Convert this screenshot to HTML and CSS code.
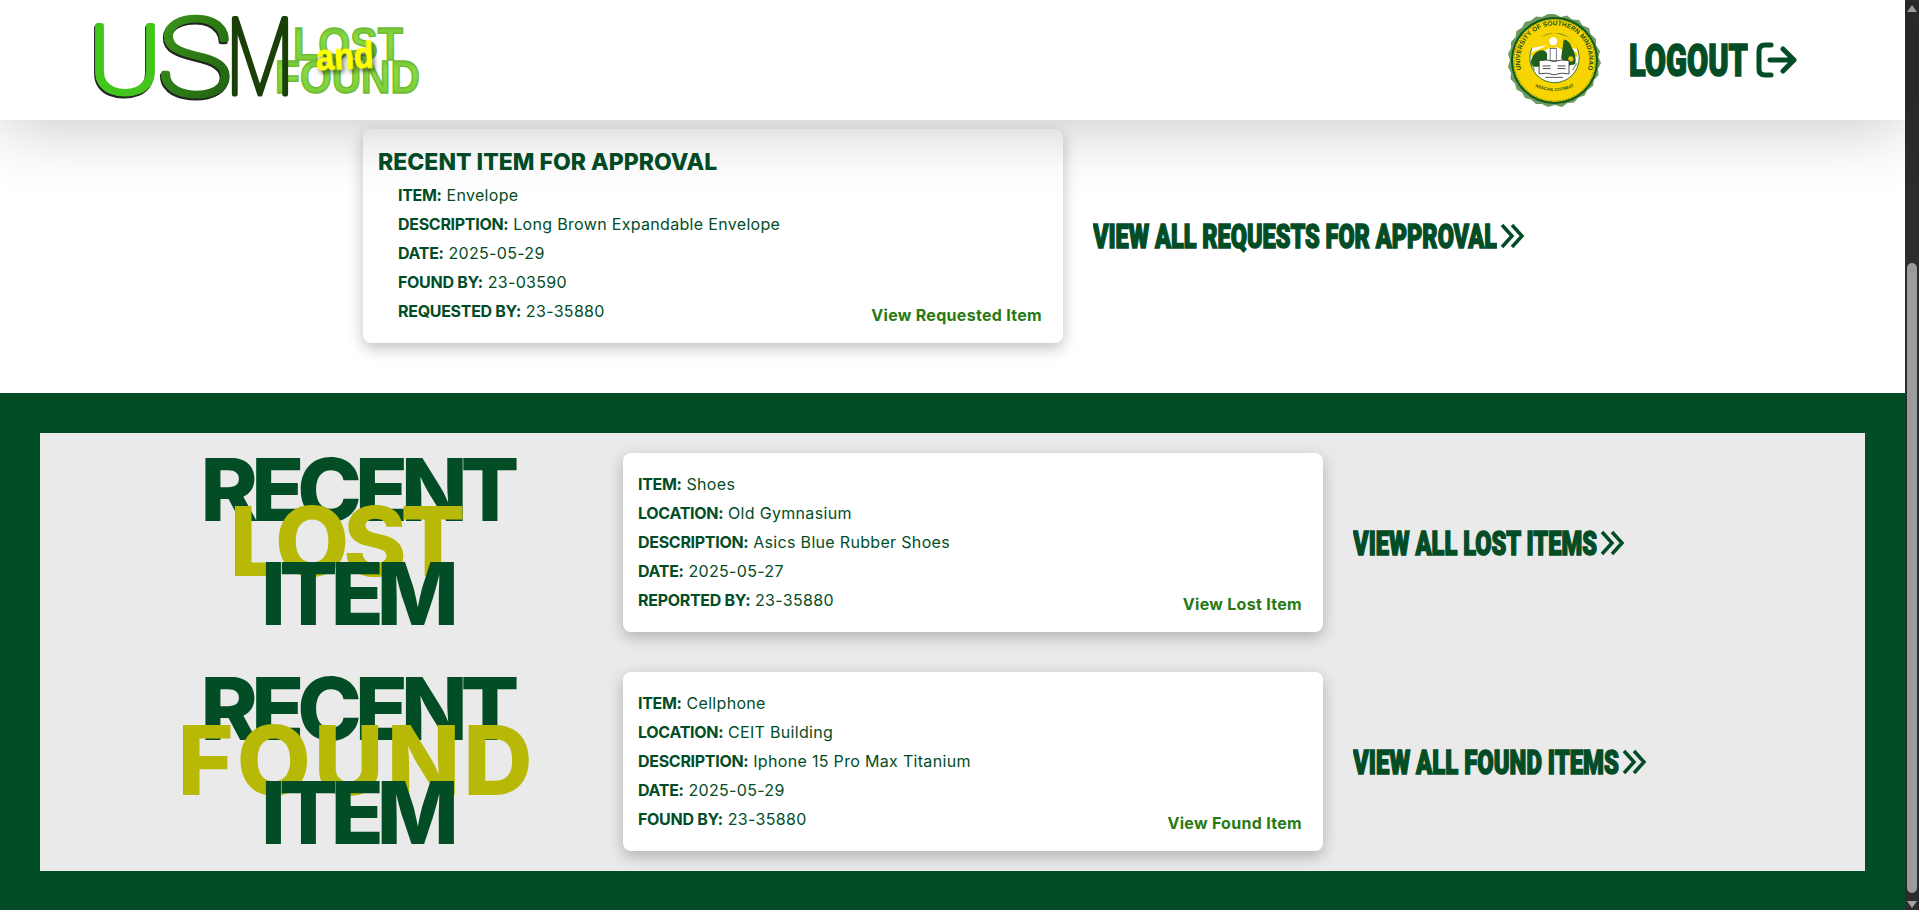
FILE: index.html
```html
<!DOCTYPE html>
<html lang="en">
<head>
    <meta charset="UTF-8">
    <meta name="viewport" content="width=device-width, initial-scale=1.0">
    <title>USM Lost and Found</title>
    <link rel="stylesheet" href="styles.css">
</head>
<body>
    <div class="page">
        <header class="topbar">
            <svg class="logo" width="370" height="120" viewBox="0 0 370 120" role="img" aria-label="USM Lost and Found">
                <defs>
                    <linearGradient id="sGrad" x1="0" y1="0" x2="1" y2="1">
                        <stop offset="0" stop-color="#3f9c1c"/>
                        <stop offset="1" stop-color="#1c5a0f"/>
                    </linearGradient>
                    <linearGradient id="wordGrad" x1="0" y1="0" x2="0" y2="1">
                        <stop offset="0" stop-color="#5fa82d"/>
                        <stop offset="0.35" stop-color="#88da40"/>
                        <stop offset="0.75" stop-color="#80d03c"/>
                        <stop offset="1" stop-color="#55992a"/>
                    </linearGradient>
                </defs>
                <text class="logo-word" x="231" y="60" font-size="46" textLength="110" lengthAdjust="spacingAndGlyphs" fill="url(#wordGrad)">LOST</text>
                <text class="logo-word" x="213" y="93" font-size="46" textLength="145" lengthAdjust="spacingAndGlyphs" fill="url(#wordGrad)">FOUND</text>
                <text class="logo-big logo-u" x="26" y="93" font-size="94" textLength="74" lengthAdjust="spacingAndGlyphs">U</text>
                <text class="logo-big logo-s" x="96" y="95" font-size="108" textLength="74" lengthAdjust="spacingAndGlyphs">S</text>
                <text class="logo-big logo-m" x="164" y="94" font-size="105" textLength="68" lengthAdjust="spacingAndGlyphs">M</text>
                <text class="logo-and" x="254" y="69" font-size="37" textLength="58" lengthAdjust="spacingAndGlyphs" transform="rotate(-3 283 58)">and</text>
            </svg>
            <div class="topbar-right">
                <svg class="seal" width="93" height="93" viewBox="0 0 93 93" role="img" aria-label="University of Southern Mindanao seal">
                    <defs>
                        <path id="sealTop" d="M16 62 A34.500 34.500 0 1 1 77 62"/>
                        <path id="sealBottom" d="M26 72 Q46.500 82 67 72"/>
                    </defs>
                    <polygon fill="#6d9a5f" points="46.5,0 53,3 59,1.500 64,5.500 71,6 74.500,11.500 81,14 82.500,20 88,25 88,31 92,37 90.500,43 93,49 90,55 90.500,61 86,66 85,72 79.500,76 76.500,81.500 70.500,83.500 66,88.500 59.500,89 54,93 47,91 40,93 34,90 28,90 23,85.500 17,84 14,78.500 8.500,75.500 7,69.500 2.500,65 3,58.500 0,53 2,46.500 0,40 3,34 3,28 7.500,23 8.500,17 14,13.500 17,8 23,6.500 28,2.500 34,3 40,0"/>
                    <circle cx="46.500" cy="46.500" r="43.500" fill="#0d5a1c"/>
                    <circle cx="46.500" cy="46.500" r="41.500" fill="#f8d400"/>
                    <circle cx="46.500" cy="46.500" r="40.500" fill="none" stroke="#1d6a20" stroke-width="0.700" stroke-dasharray="1.500 1.500"/>
                    <text class="seal-text"><textPath href="#sealTop" startOffset="50%" text-anchor="middle" textLength="128">UNIVERSITY OF SOUTHERN MINDANAO</textPath></text>
                    <text class="seal-motto"><textPath href="#sealBottom" startOffset="50%" text-anchor="middle">KABACAN, COTABATO</textPath></text>
                    <g transform="translate(5.600 5.300) scale(0.880)">
                        <circle cx="46.500" cy="44" r="28" fill="#fff" stroke="#1f6a22" stroke-width="1"/>
                        <polygon fill="#f8d400" points="46,28 19,33 22,27 30,20 46,15 62,20 70,27 73,34"/>
                        <polygon fill="#f8d400" points="46,30 20,43 20,38 46,26 72,38 72,43"/>
                        <circle cx="45" cy="25" r="7.500" fill="#f8d400"/>
                        <circle cx="45" cy="25" r="4.500" fill="#fff"/>
                        <path fill="#1f5f1c" d="M25 38 Q34 32 38 39 L38 50 Q30 56 20 53 Q18 45 25 38Z"/>
                        <path fill="#1f5f1c" d="M54 44 L57 23 Q64 24 66 32 Q72 40 70 51 L60 53Z"/>
                        <circle cx="65" cy="45" r="3" fill="#e2c400"/>
                        <rect x="41.500" y="33" width="7" height="14" fill="#fff" stroke="#444" stroke-width="0.800"/>
                        <path fill="#fff" stroke="#333" stroke-width="1" d="M29 47 Q38 45 46 48 Q54 45 63 47 V62 Q54 60 46 63 Q38 60 29 62Z"/>
                        <path fill="none" stroke="#333" stroke-width="1" d="M33 53 H42 M50 53 H59 M33 56 H42 M50 56 H59"/>
                        <path fill="none" stroke="#6a9a60" stroke-width="1.200" d="M24 58 L20 50 M67 58 L72 50"/>
                        <path fill="none" stroke="#444" stroke-width="1" d="M36 66 H56"/>
                    </g>
                </svg>
                <a class="logout" href="#">
                    <span class="impact-label">
                        <svg width="119" height="54" viewBox="0 0 119 54" role="img" aria-label="LOGOUT"><text class="impact" x="0" y="43" font-size="45" textLength="119" lengthAdjust="spacingAndGlyphs">LOGOUT</text></svg>
                    </span>
                    <svg class="logout-icon" width="41" height="36" viewBox="0 0 41 36" aria-hidden="true">
                        <path d="M15 3 H9 Q3 3 3 9 V27 Q3 33 9 33 H15 M14 18 H38 M27 7 L38 18 L27 29"/>
                    </svg>
                </a>
            </div>
        </header>

        <section class="approval">
            <div class="card card-approval">
                <h2 class="card-title">RECENT ITEM FOR APPROVAL</h2>
                <div class="card-rows indented">
                    <p class="row"><b>ITEM:</b> Envelope</p>
                    <p class="row"><b>DESCRIPTION:</b> Long Brown Expandable Envelope</p>
                    <p class="row"><b>DATE:</b> 2025-05-29</p>
                    <p class="row"><b>FOUND BY:</b> 23-03590</p>
                    <div class="row row-last">
                        <p><b>REQUESTED BY:</b> 23-35880</p>
                        <a class="view-link" href="#">View Requested Item</a>
                    </div>
                </div>
            </div>
            <a class="view-all" href="#">
                <svg width="404" height="44" viewBox="0 0 404 44" role="img" aria-label="VIEW ALL REQUESTS FOR APPROVAL"><text class="impact" x="0" y="34" font-size="34" textLength="404" lengthAdjust="spacingAndGlyphs">VIEW ALL REQUESTS FOR APPROVAL</text></svg>
                <svg class="chevrons" width="25" height="26" viewBox="0 0 25 26" aria-hidden="true"><path d="M2 2 L12 13 L2 24 M12 2 L22 13 L12 24"/></svg>
            </a>
        </section>

        <section class="recent">
            <div class="recent-panel">
                <div class="recent-row">
                    <h2 class="stack">
                        <span class="stack-line">RECENT</span>
                        <span class="stack-accent stack-lost">LOST</span>
                        <span class="stack-line stack-last">ITEM</span>
                    </h2>
                    <div class="card">
                        <div class="card-rows">
                            <p class="row"><b>ITEM:</b> Shoes</p>
                            <p class="row"><b>LOCATION:</b> Old Gymnasium</p>
                            <p class="row"><b>DESCRIPTION:</b> Asics Blue Rubber Shoes</p>
                            <p class="row"><b>DATE:</b> 2025-05-27</p>
                            <div class="row row-last">
                                <p><b>REPORTED BY:</b> 23-35880</p>
                                <a class="view-link" href="#">View Lost Item</a>
                            </div>
                        </div>
                    </div>
                    <a class="view-all" href="#">
                        <svg width="244" height="44" viewBox="0 0 244 44" role="img" aria-label="VIEW ALL LOST ITEMS"><text class="impact" x="0" y="33.500" font-size="34" textLength="244" lengthAdjust="spacingAndGlyphs">VIEW ALL LOST ITEMS</text></svg>
                        <svg class="chevrons" width="25" height="26" viewBox="0 0 25 26" aria-hidden="true"><path d="M2 2 L12 13 L2 24 M12 2 L22 13 L12 24"/></svg>
                    </a>
                </div>
                <div class="recent-row">
                    <h2 class="stack">
                        <span class="stack-line">RECENT</span>
                        <span class="stack-accent stack-found">FOUND</span>
                        <span class="stack-line stack-last">ITEM</span>
                    </h2>
                    <div class="card">
                        <div class="card-rows">
                            <p class="row"><b>ITEM:</b> Cellphone</p>
                            <p class="row"><b>LOCATION:</b> CEIT Building</p>
                            <p class="row"><b>DESCRIPTION:</b> Iphone 15 Pro Max Titanium</p>
                            <p class="row"><b>DATE:</b> 2025-05-29</p>
                            <div class="row row-last">
                                <p><b>FOUND BY:</b> 23-35880</p>
                                <a class="view-link" href="#">View Found Item</a>
                            </div>
                        </div>
                    </div>
                    <a class="view-all" href="#">
                        <svg width="266" height="44" viewBox="0 0 266 44" role="img" aria-label="VIEW ALL FOUND ITEMS"><text class="impact" x="0" y="33.500" font-size="34" textLength="266" lengthAdjust="spacingAndGlyphs">VIEW ALL FOUND ITEMS</text></svg>
                        <svg class="chevrons" width="25" height="26" viewBox="0 0 25 26" aria-hidden="true"><path d="M2 2 L12 13 L2 24 M12 2 L22 13 L12 24"/></svg>
                    </a>
                </div>
            </div>
        </section>
    </div>

    <!-- the reference is scrolled, so the bar is drawn by hand -->
    <div class="scrollbar" aria-hidden="true">
        <span class="arrow arrow-up"></span>
        <span class="thumb"></span>
        <span class="arrow arrow-down"></span>
    </div>
</body>
</html>
```

FILE: styles.css
```css
* {
    margin: 0;
    padding: 0;
    box-sizing: border-box;
}

html,
body {
    height: 910px;
    overflow: hidden;
}

body {
    display: flex;
    font-family: Inter, "Noto Sans", sans-serif;
    font-size: 16px;
    color: #034d26;
    background-color: #fff;
}

a {
    color: inherit;
    text-decoration: none;
}

.page {
    flex: 1;
    min-width: 0;
    display: flex;
    flex-direction: column;
}

/* top bar */
.topbar {
    height: 120px;
    flex-shrink: 0;
    display: flex;
    align-items: center;
    justify-content: space-between;
    padding-left: 62px;
    background-color: #fff;
    box-shadow: 0 4px 70px rgba(0, 0, 0, 0.24);
    position: relative;
    z-index: 2;
}

.logo {
    display: block;
    overflow: visible;
}

.logo-word {
    font-family: "Liberation Sans", sans-serif;
    font-weight: 700;
    stroke: #6cbc34;
    stroke-width: 1.5px;
}

.logo-big {
    font-family: Roboto, sans-serif;
    font-weight: 100;
    stroke-width: 5px;
    stroke-linejoin: round;
    filter: drop-shadow(-1px 2px 0 #222);
}

.logo-u {
    fill: #43c61c;
    stroke: #43c61c;
}

.logo-s {
    fill: url(#sGrad);
    stroke: url(#sGrad);
}

.logo-m {
    fill: #1a4008;
    stroke: #1a4008;
    filter: none;
}

.logo-and {
    font-family: "Liberation Sans", sans-serif;
    font-weight: 700;
    fill: #ffff00;
    stroke: #ffff00;
    stroke-width: 1px;
    filter: drop-shadow(2px 3px 2px rgba(0, 0, 0, 0.55));
}

.topbar-right {
    display: flex;
    align-items: center;
    padding-right: 108px;
}

.seal {
    display: block;
    margin-right: 28px;
}

.seal-text {
    font-family: "Liberation Sans", sans-serif;
    font-size: 6.4px;
    font-weight: 700;
    fill: #14501a;
}

.seal-motto {
    font-family: "Liberation Sans", sans-serif;
    font-size: 4.2px;
    font-weight: 700;
    fill: #14501a;
}

.logout {
    display: flex;
    align-items: center;
    gap: 8px;
}

.impact-label {
    display: block;
}

.impact-label svg,
.view-all svg {
    display: block;
}

.impact {
    font-family: Roboto, sans-serif;
    font-weight: 900;
    fill: #034d26;
    stroke: #034d26;
    stroke-width: 1.6px;
}

.logout-icon path {
    fill: none;
    stroke: #034d26;
    stroke-width: 5;
    stroke-linecap: round;
    stroke-linejoin: round;
}

/* approval block */
.approval {
    height: 273px;
    flex-shrink: 0;
    display: flex;
    align-items: flex-start;
    padding: 9px 0 0 363px;
}

.approval .view-all {
    margin-top: 85px;
}

.card {
    width: 700px;
    flex-shrink: 0;
    padding: 19px 21px 15px 15px;
    background-color: #fff;
    border-radius: 8px;
    box-shadow: 0 5px 15px rgba(0, 0, 0, 0.25);
}

.card-approval {
    padding-top: 15px;
}

.card-title {
    font-size: 23px;
    line-height: 36px;
    margin-bottom: 3px;
    font-weight: 800;
}

.indented {
    padding-left: 20px;
}

.row {
    height: 29px;
    line-height: 24px;
    white-space: nowrap;
    letter-spacing: 0.32px;
}

.row b {
    font-weight: 700;
    letter-spacing: -0.3px;
}

.row-last {
    display: flex;
    justify-content: space-between;
    align-items: flex-start;
}

.view-link {
    margin-top: 4px;
    color: #2a7a13;
    font-weight: 700;
    letter-spacing: 0.3px;
}

.view-all {
    display: flex;
    align-items: center;
    gap: 3px;
    margin-left: 30px;
    align-self: flex-start;
}

.chevrons path {
    fill: none;
    stroke: #034d26;
    stroke-width: 3.5;
}

/* green block */
.recent {
    flex: 1;
    padding: 40px;
    background-color: #034d26;
}

.recent-panel {
    height: 438px;
    display: flex;
    flex-direction: column;
    gap: 40px;
    padding-top: 20px;
    background-color: #eaeaea;
}

.recent-row {
    display: flex;
    align-items: center;
}

/* RECENT / LOST / ITEM are stacked so the lines overlap */
.stack {
    width: 583px;
    height: 179px;
    flex-shrink: 0;
    padding: 10px 0 0 50px;
    display: flex;
    flex-direction: column;
    align-items: center;
    font-weight: 800;
    white-space: nowrap;
}

.stack-line {
    font-size: 87px;
    line-height: 54px;
    height: 51px;
    letter-spacing: -7px;
}

.stack-accent {
    font-size: 96px;
    line-height: 54px;
    height: 53px;
    color: #b8b806;
    position: relative;
}

.stack-lost {
    letter-spacing: -6px;
    margin-right: 24px;
}

.stack-found {
    letter-spacing: 3px;
}

.stack-last {
    position: relative;
}

.recent-row .view-all {
    align-self: center;
}

/* scrollbar */
.scrollbar {
    width: 14px;
    flex-shrink: 0;
    height: 910px;
    display: flex;
    flex-direction: column;
    align-items: center;
    background-color: #2c2c2c;
}

.arrow {
    width: 0;
    height: 0;
    border-left: 5px solid transparent;
    border-right: 5px solid transparent;
}

.arrow-up {
    margin-top: 5px;
    border-bottom: 7px solid #a3a3a3;
}

.arrow-down {
    margin-top: 8px;
    border-top: 7px solid #a3a3a3;
}

.thumb {
    width: 10px;
    height: 630px;
    margin-top: 251px;
    border-radius: 5px;
    background-color: #9b9b9b;
}
```
